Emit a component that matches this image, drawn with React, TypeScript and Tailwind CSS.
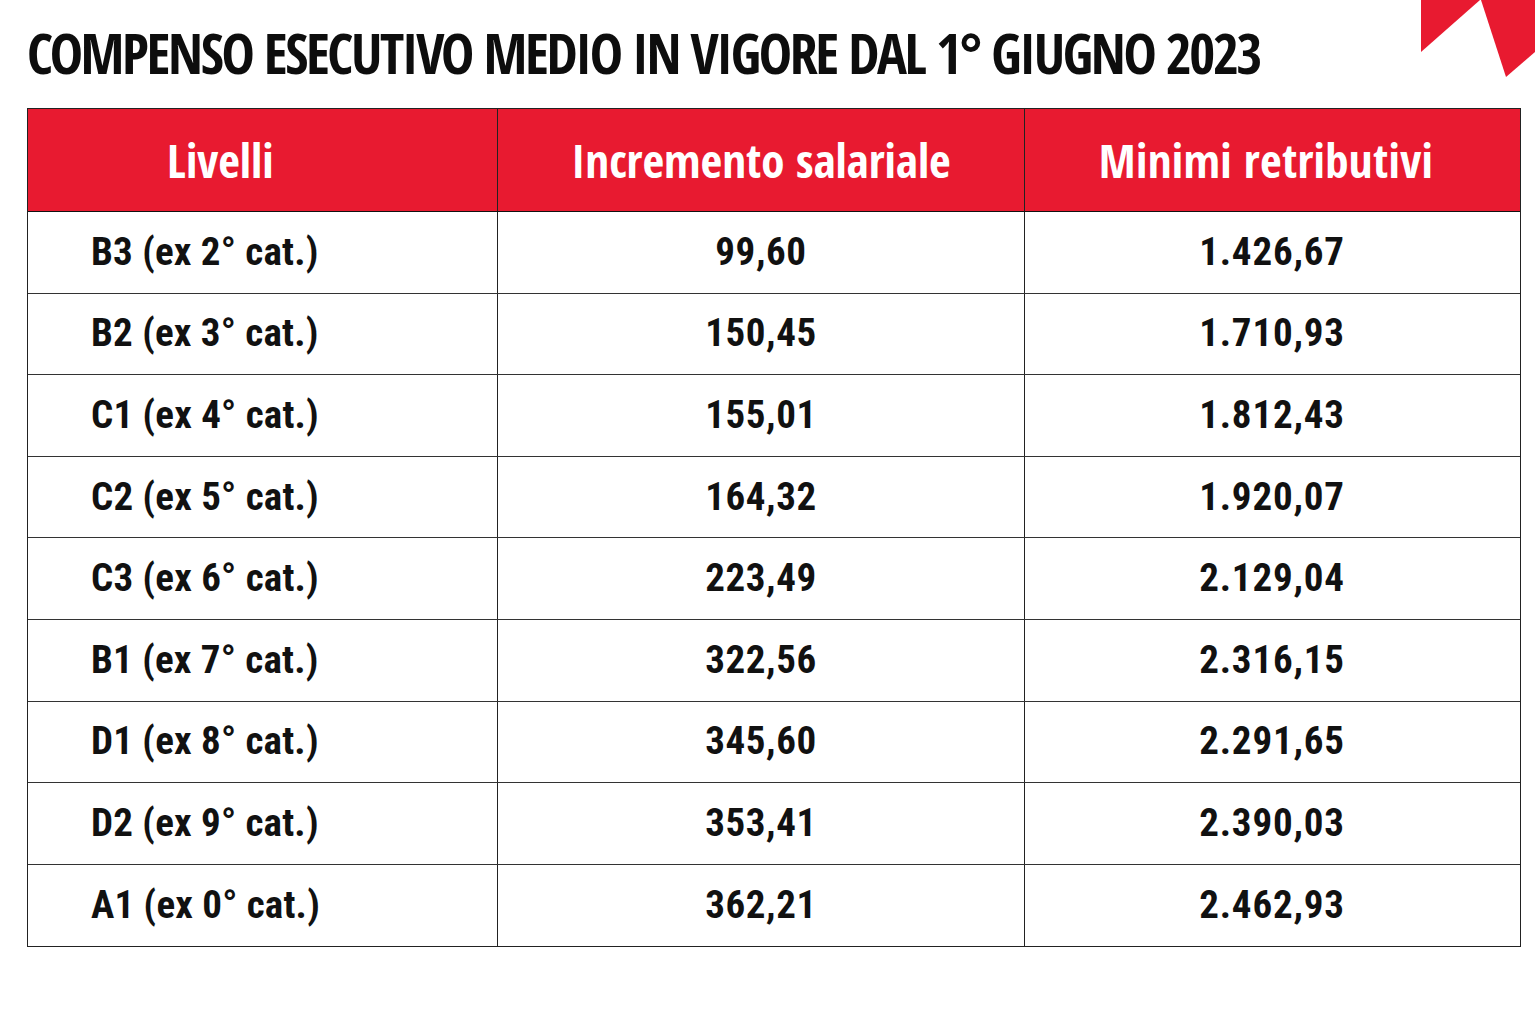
const rows = [
  ["B3 (ex 2° cat.)", "99,60", "1.426,67"],
  ["B2 (ex 3° cat.)", "150,45", "1.710,93"],
  ["C1 (ex 4° cat.)", "155,01", "1.812,43"],
  ["C2 (ex 5° cat.)", "164,32", "1.920,07"],
  ["C3 (ex 6° cat.)", "223,49", "2.129,04"],
  ["B1 (ex 7° cat.)", "322,56", "2.316,15"],
  ["D1 (ex 8° cat.)", "345,60", "2.291,65"],
  ["D2 (ex 9° cat.)", "353,41", "2.390,03"],
  ["A1 (ex 0° cat.)", "362,21", "2.462,93"],
];

function Corner() {
  return (
    <svg className="absolute right-0 top-0" width="115" height="80" viewBox="0 0 115 80">
      <polygon points="1,0 1,52 60,0" fill="#e81a30" />
      <polygon points="61,0 86,77 115,52 115,0" fill="#e81a30" />
    </svg>
  );
}

export default function App() {
  return (
    <div className="relative h-[1024px] w-[1535px] overflow-hidden bg-white">
      <Corner />
      <h1 className="pl-[27px] pt-6 font-['Open_Sans_Condensed',sans-serif] text-[56px] font-bold leading-none tracking-[-2.4px] text-[#0d0d0d]">
        COMPENSO ESECUTIVO MEDIO IN VIGORE DAL 1° GIUGNO 2023
      </h1>

      <div className="ml-[27px] mt-7 w-[1494px] border-[1.5px] border-[#222]">
        <div className="grid h-[103px] grid-cols-[470px_527px_494px] border-b-[1.5px] border-[#111] bg-[#e81a30] font-['Open_Sans_Condensed',sans-serif] text-[47px] font-bold leading-none text-white">
          <div className="flex items-center border-r-[1.5px] border-[#222] pl-[139px]">Livelli</div>
          <div className="flex items-center justify-center border-r-[1.5px] border-[#222]">Incremento salariale</div>
          <div className="flex items-center justify-center pr-3 tracking-[0.3px]">Minimi retributivi</div>
        </div>

        {rows.map((r, i) => (
          <div
            key={r[0]}
            className={
              i < rows.length - 1
                ? "grid h-[81.6px] grid-cols-[470px_527px_494px] border-b-[1.5px] border-[#333] font-['Roboto_Condensed',sans-serif] text-[39px] font-bold leading-none text-[#111]"
                : "grid h-[81.6px] grid-cols-[470px_527px_494px] font-['Roboto_Condensed',sans-serif] text-[39px] font-bold leading-none text-[#111]"
            }
          >
            <div className="flex items-center border-r-[1.5px] border-[#222] pl-[63px] tracking-[0.2px]">{r[0]}</div>
            <div className="flex items-center justify-center border-r-[1.5px] border-[#222] tracking-[0.6px]">{r[1]}</div>
            <div className="flex items-center justify-center tracking-[0.8px]">{r[2]}</div>
          </div>
        ))}
      </div>
    </div>
  );
}
